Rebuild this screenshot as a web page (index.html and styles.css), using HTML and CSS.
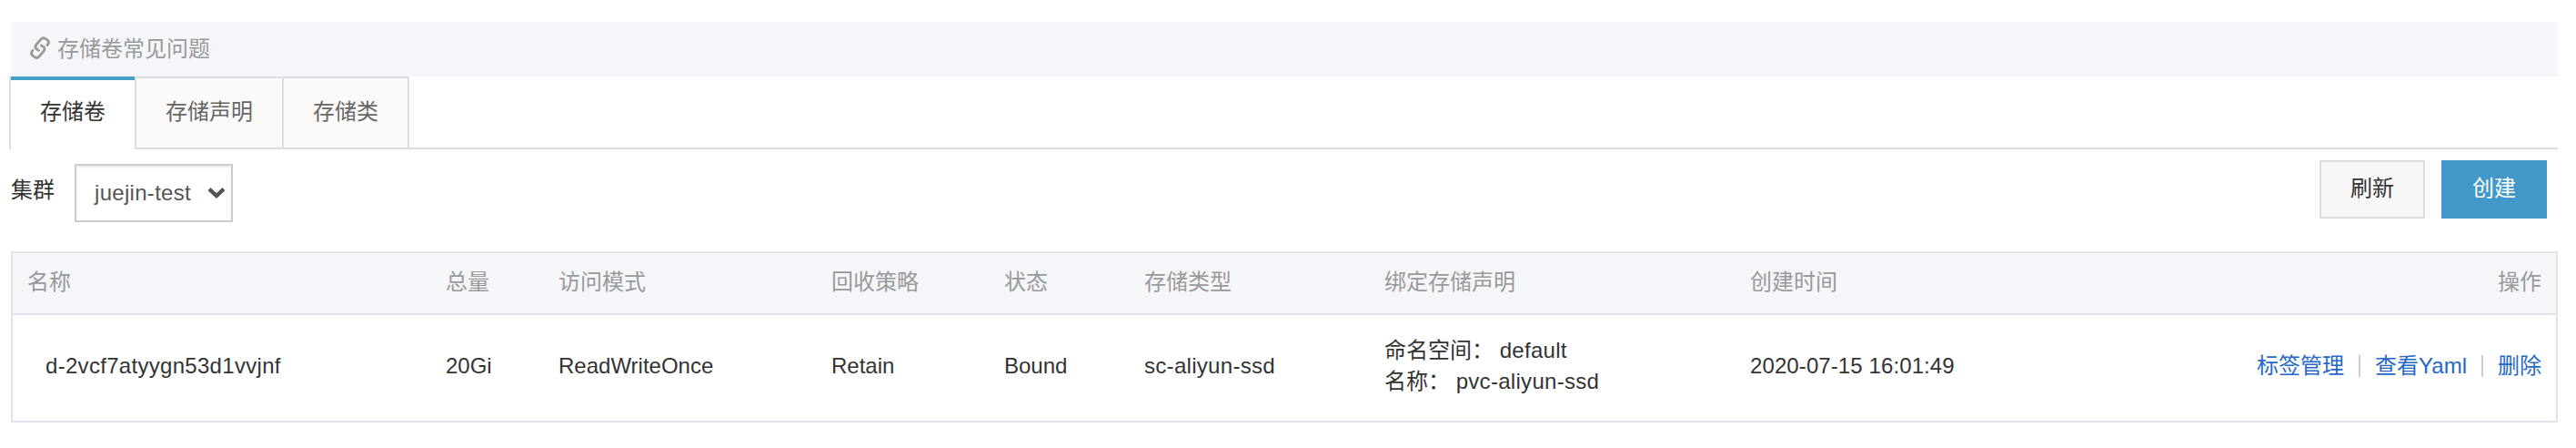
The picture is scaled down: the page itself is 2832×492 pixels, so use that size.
FILE: index.html
```html
<!DOCTYPE html>
<html lang="zh-CN">
<head>
<meta charset="utf-8">
<title>存储卷</title>
<link rel="stylesheet" href="styles.css">
</head>
<body>
<div class="notice">
  <svg class="notice-icon" width="22" height="26" viewBox="0 0 22 26" fill="none" stroke="#999" stroke-width="2.8" stroke-linecap="round" stroke-linejoin="round">
    <path d="M9.4 15.4L7 13.6Q5 11.6 6.8 9.2L12.2 2.9Q14 1 16.2 2.1L19 3.8Q21.4 5.6 20 8.1L18.9 9.7"/>
    <path d="M12.4 9.8L15 11.6Q17 13.6 15.2 16L9.8 22.3Q8 24.2 5.8 23.1L3 21.2Q.7 19.3 2 16.9L3 15.4"/>
  </svg>
  <span>存储卷常见问题</span>
</div>
<nav class="tabs">
  <a class="tab tab-active">存储卷</a>
  <a class="tab">存储声明</a>
  <a class="tab">存储类</a>
</nav>
<div class="toolbar">
  <span class="label">集群</span>
  <div class="select">
    <span class="latin">juejin-test</span>
    <svg width="20" height="14" viewBox="0 0 20 14" fill="none" stroke="#555" stroke-width="4.4"><path d="M2 2.6L10 10L18 2.6"/></svg>
  </div>
  <div class="buttons">
    <button class="btn">刷新</button>
    <button class="btn btn-primary">创建</button>
  </div>
</div>
<div class="table">
  <div class="row head">
    <span>名称</span><span>总量</span><span>访问模式</span><span>回收策略</span><span>状态</span><span>存储类型</span><span>绑定存储声明</span><span>创建时间</span><span class="ops">操作</span>
  </div>
  <div class="row body">
    <span class="name latin">d-2vcf7atyygn53d1vvjnf</span><span>20Gi</span><span>ReadWriteOnce</span><span>Retain</span><span>Bound</span><span class="latin">sc-aliyun-ssd</span>
    <div class="claim"><div>命名空间： <span class="latin">default</span></div><div>名称： <span class="latin">pvc-aliyun-ssd</span></div></div>
    <span class="time">2020-07-15 16:01:49</span>
    <div class="ops"><a>标签管理</a><i class="sep"></i><a>查看Yaml</a><i class="sep"></i><a>删除</a></div>
  </div>
</div>
</body>
</html>
```
FILE: styles.css
```css
* { box-sizing: border-box; }
body {
  margin: 0;
  padding: 24px 20px 0 12px;
  background: #fff;
  color: #333;
  font: 24px/34px "Liberation Sans", "Noto Sans CJK SC", sans-serif;
}
.latin { letter-spacing: .3px; }
.time { letter-spacing: .1px; }
.notice {
  display: flex;
  align-items: center;
  gap: 8px;
  height: 60px;
  padding: 0 21px 1px;
  background: #f5f6fa;
  color: #999;
}
.notice-icon { display: block; margin-top: -1px; }
.tabs {
  display: flex;
  height: 80px;
  margin-left: -2px;
  background: linear-gradient(#ddd, #ddd) 0 100% / 100% 2px no-repeat;
}
.tab {
  padding: 20px 32px 0;
  background: #fbfaf8;
  border: 2px solid #ddd;
  border-left: 0;
  color: #666;
}
.tab-active {
  padding-top: 22px;
  border: 0;
  background:
    linear-gradient(#ddd, #ddd) 0 0 / 2px 100% no-repeat,
    linear-gradient(#ddd, #ddd) 100% 0 / 2px 100% no-repeat,
    linear-gradient(#459fc6, #459fc6) 2px 0 / 136px 4px no-repeat,
    #fff;
  width: 140px;
  padding-left: 34px;
  padding-right: 0;
  color: #333;
}
.toolbar {
  display: flex;
  align-items: flex-start;
  height: 112px;
  padding: 12px 12px 0 0;
}
.label { margin-top: 16px; }
.select {
  display: flex;
  align-items: center;
  justify-content: space-between;
  width: 174px;
  height: 64px;
  margin: 4px 0 0 22px;
  padding: 0 6px 0 20px;
  border: 2px solid #ccc;
  box-shadow: inset 0 2px 2px rgba(0, 0, 0, .075);
  color: #555;
}
.buttons { display: flex; gap: 18px; margin-left: auto; }
.btn {
  width: 116px;
  height: 64px;
  padding: 0 0 2px;
  border: 2px solid #ddd;
  background: #f7f7f7;
  color: #333;
  font: inherit;
}
.btn-primary { background: #4298c8; border-color: #4298c8; color: #fff; }
.table { border: 2px solid #e1e4ea; }
.row {
  display: grid;
  grid-template-columns: 460px 124px 300px 190px 154px 264px 402px 1fr auto;
  align-items: center;
  padding: 0 16px;
}
.head {
  height: 68px;
  padding-bottom: 3px;
  border-bottom: 2px solid #e1e4ea;
  background: #f5f6fa;
  color: #999;
}
.body { height: 116px; padding-bottom: 4px; }
.name { padding-left: 20px; }
.ops { display: flex; align-items: center; color: #2468c8; }
.head .ops { color: #999; }
.sep { width: 2px; height: 24px; margin: 0 16px; background: #ccc; }
```
